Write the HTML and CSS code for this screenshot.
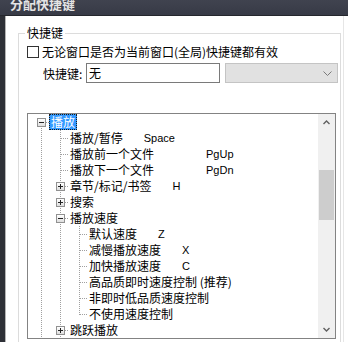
FILE: index.html
```html
<!DOCTYPE html>
<html lang="zh-CN">
<head>
  <meta charset="UTF-8">
  <meta name="viewport" content="width=device-width, initial-scale=1.0">
  <title>分配快捷键</title>
  <link rel="stylesheet" href="styles.css">
</head>
<body>
  <div class="titlebar"><span class="title">分配快捷键</span></div>

  <div class="frame">
    <div class="client">
      <fieldset class="group">
        <legend>快捷键</legend>

        <label class="check-row"><span class="checkbox"></span>无论窗口是否为当前窗口(全局)快捷键都有效</label>

        <div class="key-row">
          <span class="key-label">快捷键:</span>
          <div class="edit">无</div>
          <div class="combo">
            <svg width="9" height="5" viewBox="0 0 9 5"><polyline points="0.5,0.5 4.5,4.5 8.5,0.5" fill="none" stroke="#7a7a7a" stroke-width="1"/></svg>
          </div>
        </div>

        <div class="tree">
          <div class="tree-items">
            <div class="row"><span class="cell root"><i class="box minus"></i></span><span class="text sel">播放</span></div>
            <div class="row"><span class="cell pipe"></span><span class="cell tee"></span><span class="text">播放/暂停</span><span class="key">Space</span></div>
            <div class="row"><span class="cell pipe"></span><span class="cell tee"></span><span class="text">播放前一个文件</span><span class="key far">PgUp</span></div>
            <div class="row"><span class="cell pipe"></span><span class="cell tee"></span><span class="text">播放下一个文件</span><span class="key far">PgDn</span></div>
            <div class="row"><span class="cell pipe"></span><span class="cell tee"><i class="box plus"></i></span><span class="text">章节/标记/书签</span><span class="key">H</span></div>
            <div class="row"><span class="cell pipe"></span><span class="cell tee"><i class="box plus"></i></span><span class="text">搜索</span></div>
            <div class="row"><span class="cell pipe"></span><span class="cell tee"><i class="box minus"></i></span><span class="text">播放速度</span></div>
            <div class="row"><span class="cell pipe"></span><span class="cell pipe"></span><span class="cell tee"></span><span class="text">默认速度</span><span class="key">Z</span></div>
            <div class="row"><span class="cell pipe"></span><span class="cell pipe"></span><span class="cell tee"></span><span class="text">减慢播放速度</span><span class="key">X</span></div>
            <div class="row"><span class="cell pipe"></span><span class="cell pipe"></span><span class="cell tee"></span><span class="text">加快播放速度</span><span class="key">C</span></div>
            <div class="row"><span class="cell pipe"></span><span class="cell pipe"></span><span class="cell tee"></span><span class="text">高品质即时速度控制 (推荐)</span></div>
            <div class="row"><span class="cell pipe"></span><span class="cell pipe"></span><span class="cell tee"></span><span class="text">非即时低品质速度控制</span></div>
            <div class="row"><span class="cell pipe"></span><span class="cell pipe"></span><span class="cell ell"></span><span class="text">不使用速度控制</span></div>
            <div class="row"><span class="cell pipe"></span><span class="cell tee"><i class="box plus"></i></span><span class="text">跳跃播放</span></div>
          </div>

          <div class="vscroll">
            <div class="sb-btn">
              <svg width="7" height="5" viewBox="0 0 7 5"><polyline points="0.5,4 3.5,1 6.5,4" fill="none" stroke="#606060" stroke-width="1.4"/></svg>
            </div>
            <div class="sb-track"><div class="sb-thumb"></div></div>
            <div class="sb-btn">
              <svg width="7" height="5" viewBox="0 0 7 5"><polyline points="0.5,1 3.5,4 6.5,1" fill="none" stroke="#606060" stroke-width="1.4"/></svg>
            </div>
          </div>
        </div>
      </fieldset>
    </div>
  </div>
</body>
</html>
```

FILE: styles.css
```css
:root {
  --dot-v: repeating-linear-gradient(to bottom, #a0a0a0 0 1px, transparent 1px 2px);
  --dot-h: repeating-linear-gradient(to right, #a0a0a0 0 1px, transparent 1px 2px);
}

html, body {
  margin: 0;
  width: 348px;
  height: 342px;
  overflow: hidden;
  background: #fff;
}

body {
  font-family: "Noto Sans CJK SC", sans-serif;
  font-size: 12px;
  color: #000;
}

.titlebar {
  height: 16px;
  overflow: hidden;
  background: linear-gradient(#40434f, #373a46);
  border-bottom: 1px solid #25272d;
  box-sizing: border-box;
}

.title {
  display: block;
  margin-top: -4px;
  padding-left: 10px;
  font-size: 13px;
  font-weight: bold;
  line-height: 16px;
  color: #e4e4e4;
}

.frame {
  height: 326px;
  overflow: hidden;
  display: flex;
  border-left: 5px solid #2e3037;
  padding-right: 4px;
}

.client {
  flex: 1;
  overflow: hidden;
  border-left: 1px solid #b4b4b4;
  border-right: 1px solid #e6e6e6;
}

.group {
  margin: 10px 2px 0 12px;
  padding: 0 0 0 8px;
  height: 318px;
  box-sizing: border-box;
  border: 1px solid #dcdcdc;
  border-bottom: none;
}

.group legend {
  padding: 0 2px;
  margin-left: -2px;
  line-height: 14px;
}

.check-row {
  display: flex;
  align-items: center;
  height: 16px;
  margin-top: 4px;
  line-height: 16px;
  white-space: nowrap;
}

.checkbox {
  width: 12px;
  height: 12px;
  box-sizing: border-box;
  border: 1px solid #333;
  background: #fff;
  margin-right: 3px;
}

.key-row {
  display: flex;
  align-items: center;
  margin-top: 3px;
  padding-left: 16px;
  height: 20px;
}

.key-label {
  width: 40px;
  margin-right: 3px;
  white-space: nowrap;
}

.edit {
  width: 134px;
  height: 20px;
  box-sizing: border-box;
  border: 1px solid #7a7a7a;
  padding-left: 2px;
  line-height: 18px;
}

.combo {
  width: 113px;
  height: 20px;
  margin-left: 5px;
  box-sizing: border-box;
  border: 1px solid #c4c4c4;
  background: #e1e1e1;
  display: flex;
  align-items: center;
  justify-content: flex-end;
  padding-right: 5px;
}

.tree {
  margin-top: 30px;
  width: 309px;
  height: 226px;
  box-sizing: border-box;
  border: 1px solid #838383;
  display: flex;
}

.tree-items {
  flex: 1;
  overflow: hidden;
  background: #fff;
}

.row {
  display: flex;
  height: 16px;
  padding-left: 2px;
  white-space: nowrap;
}

.cell {
  flex: none;
  display: flex;
  width: 19px;
  height: 16px;
}

.pipe {
  background: var(--dot-v) 11px 0 / 1px 16px no-repeat;
}

.tee {
  background: var(--dot-v) 11px 0 / 1px 16px no-repeat,
              var(--dot-h) 12px 8px / 8px 1px no-repeat;
}

.ell {
  background: var(--dot-v) 11px 0 / 1px 9px no-repeat,
              var(--dot-h) 12px 8px / 8px 1px no-repeat;
}

.root {
  background: var(--dot-v) 11px 8px / 1px 8px no-repeat,
              var(--dot-h) 12px 8px / 8px 1px no-repeat;
}

.box {
  width: 9px;
  height: 9px;
  box-sizing: border-box;
  margin: 4px 0 0 7px;
  border: 1px solid #919191;
}

.box.minus {
  background: linear-gradient(#222, #222) 1px 3px / 5px 1px no-repeat,
              linear-gradient(#fff, #dedede);
}

.box.plus {
  background: linear-gradient(#222, #222) 1px 3px / 5px 1px no-repeat,
              linear-gradient(#222, #222) 3px 1px / 1px 5px no-repeat,
              linear-gradient(#fff, #dedede);
}

.text {
  padding: 0 2px;
  line-height: 16px;
}

.sel {
  background: #3399ff;
  color: #fff;
  outline: 1px dotted #1a1a1a;
  outline-offset: -1px;
}

.key {
  font-family: "Liberation Sans", Arial, sans-serif;
  font-size: 11px;
  line-height: 16px;
  margin-left: 19px;
}

.key.far {
  margin-left: 50px;
}

.vscroll {
  width: 17px;
  flex: none;
  display: flex;
  flex-direction: column;
  background: #f0f0f0;
}

.sb-btn {
  height: 17px;
  display: flex;
  align-items: center;
  justify-content: center;
}

.sb-track {
  flex: 1;
  padding: 0 1px;
}

.sb-thumb {
  margin-top: 39px;
  height: 50px;
  background: #cdcdcd;
}
```
